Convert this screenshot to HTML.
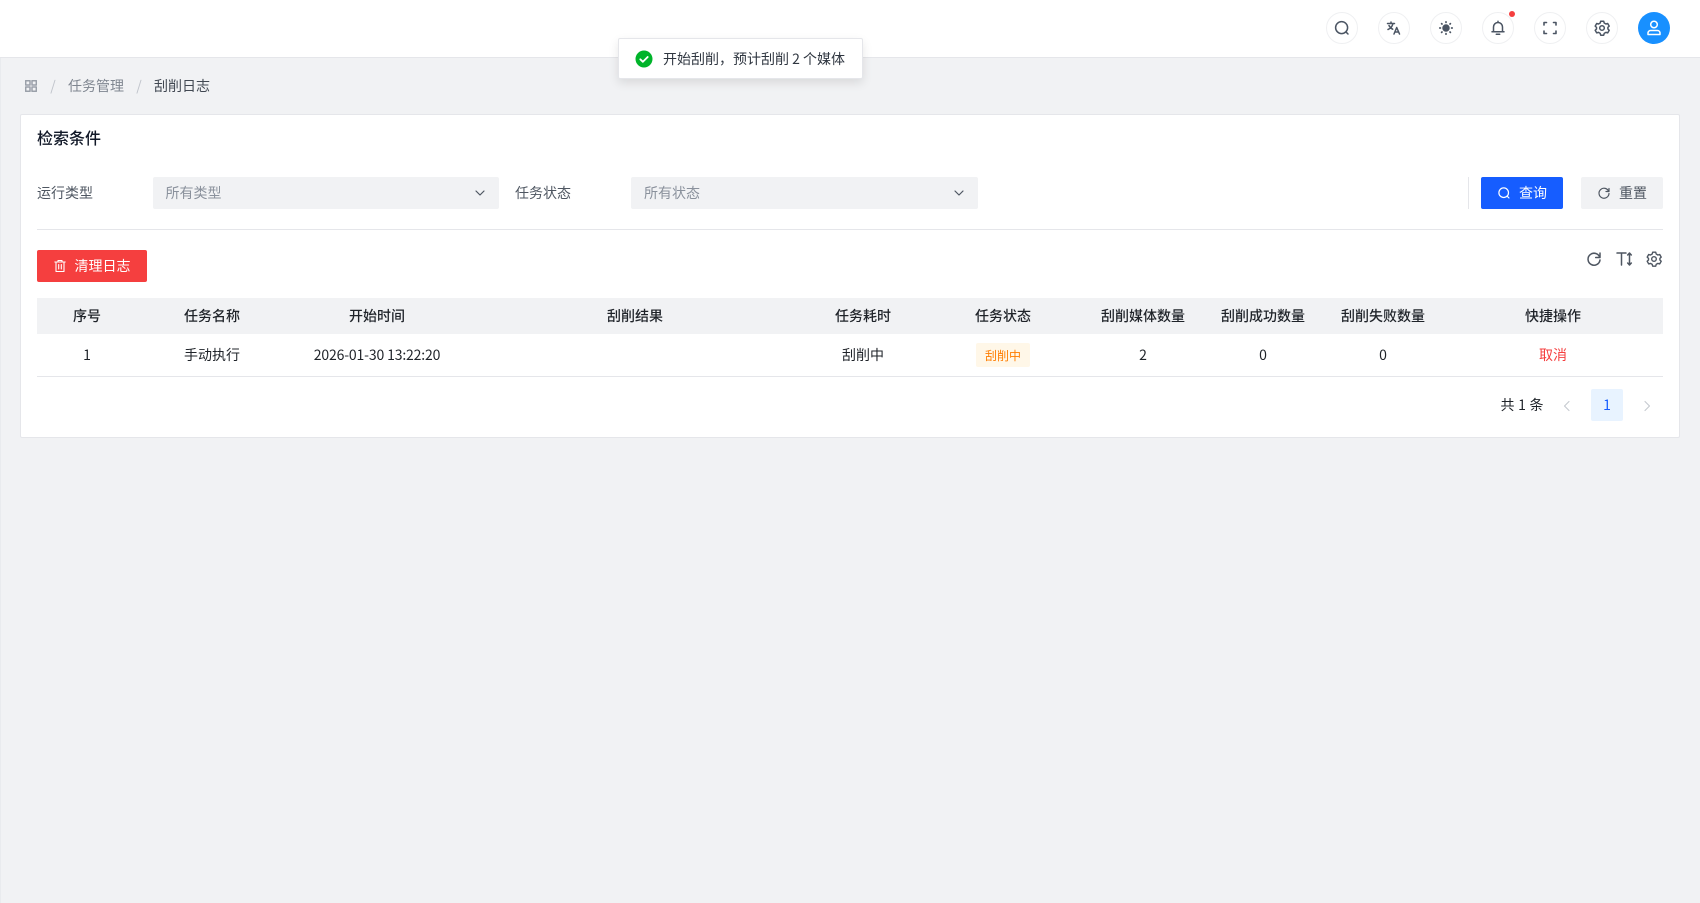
<!DOCTYPE html>
<html lang="zh-CN"><head><meta charset="utf-8"><title>刮削日志</title>
<style>
*{box-sizing:border-box}
html,body{margin:0;padding:0}
body{width:1700px;height:903px;overflow:hidden;position:relative;background:#f1f2f4;font-family:"Noto Sans CJK SC","Liberation Sans",sans-serif;font-size:14px;color:#1f2329}
.a{position:absolute;white-space:nowrap}
.t{position:absolute;white-space:nowrap;line-height:20px;transform:translate(-50%,-50%)}
.h{font-weight:500;color:#1f2329}
svg{position:absolute;display:block;fill:none;stroke-linecap:round;stroke-linejoin:round}
.c{position:absolute;top:12px;width:32px;height:32px;border:1px solid #eff0f2;border-radius:50%;background:#fff}
.c svg{left:7px;top:7px;stroke:#4b5563;stroke-width:1.5}
</style></head><body>
<div class="a" style="left:0;top:0;width:1700px;height:58px;background:#fff;border-bottom:1px solid #e5e6ea"></div>
<div class="a" style="left:0;top:58px;width:1px;height:845px;background:#e9ebee"></div>

<div class="c" style="left:1326px"><svg width="16" height="16" viewBox="0 0 16 16"><circle cx="7.600" cy="7.600" r="6"/><path d="M12.200 12.200l1.800 1.800"/></svg></div>
<div class="c" style="left:1378px"><svg width="16" height="16" viewBox="0 0 16 16"><path d="M1.500 3.500h7M5 2v1.500M7 3.500C6.300 6.500 4.500 8.500 2 9.500M3 5.500c.8 1.700 2.200 3 3.700 3.700M8 14l2.700-6.500L13.500 14M9 12h3.400"/></svg></div>
<div class="c" style="left:1430px"><svg width="16" height="16" viewBox="0 0 16 16"><circle cx="8" cy="8" r="3" fill="#4b5563"/><path stroke-width="1.700" d="M8 1.800v.6M8 13.600v.6M1.800 8h.6M13.600 8h.6M3.600 3.600l.4.4M12 12l.4.4M3.600 12.400l.4-.4M12 4l.4-.4"/></svg></div>
<div class="c" style="left:1482px"><svg width="16" height="16" viewBox="0 0 16 16"><path d="M2 11.800h12M3.500 11.800V7a4.500 4.500 0 0 1 9 0v4.800M8 1.200v1.300M6.300 14.300h3.400"/></svg></div>
<div class="c" style="left:1534px"><svg width="16" height="16" viewBox="0 0 16 16"><path stroke-width="1.600" d="M2 5V2.500h2.500M11.500 2.500H14V5M14 11v2.500h-2.500M4.500 13.500H2V11"/></svg></div>
<div class="c" style="left:1586px"><svg width="16" height="16" viewBox="0 0 16 16"><path d="M6.500 1.500h3l.5 1.800 1.700 1 1.800-.5 1.500 2.600-1.300 1.300v1.600l1.300 1.300-1.500 2.600-1.800-.5-1.700 1-.5 1.800h-3l-.5-1.800-1.700-1-1.800.5-1.500-2.600 1.300-1.300V7.700L1 6.400l1.500-2.600 1.800.5 1.700-1z" transform="translate(.2 -.3)"/><circle cx="8" cy="8" r="2.300"/></svg></div>
<div class="a" style="left:1638px;top:12px;width:32px;height:32px;border-radius:50%;background:#1890ff"><svg style="left:7px;top:7px;stroke:#fff;stroke-width:1.500" width="18" height="18" viewBox="0 0 18 18"><circle cx="9" cy="5.500" r="3.300"/><path d="M3 15.500v-1.500a2.500 2.500 0 0 1 2.500-2.500h7a2.500 2.500 0 0 1 2.500 2.500v1.500z"/></svg></div>
<div class="a" style="left:1509px;top:11px;width:6px;height:6px;border-radius:50%;background:#f53f3f"></div>

<svg style="left:25px;top:80px;stroke:#9aa0a9;stroke-width:1.500" width="12" height="12" viewBox="0 0 12 12"><rect x=".7" y=".7" width="4.300" height="4.300"/><rect x="7" y=".7" width="4.300" height="4.300"/><rect x=".7" y="7" width="4.300" height="4.300"/><rect x="7" y="7" width="4.300" height="4.300"/></svg>
<div class="t" style="left:53px;top:86px;color:#c0c4cb">/</div>
<div class="t" style="left:96px;top:86px;color:#7f8690">任务管理</div>
<div class="t" style="left:139px;top:86px;color:#c0c4cb">/</div>
<div class="t" style="left:182px;top:86px;color:#414852">刮削日志</div>

<div class="a" style="left:20px;top:114px;width:1660px;height:324px;background:#fff;border:1px solid #e5e6ea;border-radius:2px"></div>
<div class="t" style="left:69px;top:137px;font-size:16px;font-weight:500;color:#111827;line-height:22px">检索条件</div>

<div class="t" style="left:65px;top:193px;color:#4e5661">运行类型</div>
<div class="a" style="left:153px;top:177px;width:346px;height:32px;background:#f1f2f4;border-radius:2px"></div>
<div class="t" style="left:193.500px;top:193px;color:#8a919c">所有类型</div>
<svg style="left:474px;top:188px;stroke:#4e5661;stroke-width:1.200" width="12" height="10" viewBox="0 0 12 10"><path d="M2 3l4 4 4-4"/></svg>
<div class="t" style="left:543px;top:193px;color:#4e5661">任务状态</div>
<div class="a" style="left:631px;top:177px;width:347px;height:32px;background:#f1f2f4;border-radius:2px"></div>
<div class="t" style="left:672px;top:193px;color:#8a919c">所有状态</div>
<svg style="left:953px;top:188px;stroke:#4e5661;stroke-width:1.200" width="12" height="10" viewBox="0 0 12 10"><path d="M2 3l4 4 4-4"/></svg>

<div class="a" style="left:1468px;top:177px;width:1px;height:32px;background:#e5e6ea"></div>
<div class="a" style="left:1481px;top:177px;width:82px;height:32px;background:#165dff;border-radius:2px"></div>
<svg style="left:1497px;top:186px;stroke:#fff;stroke-width:1.200" width="14" height="14" viewBox="0 0 14 14"><circle cx="6.700" cy="6.700" r="4.800"/><path d="M10.300 10.300l1.700 1.700"/></svg>
<div class="t" style="left:1533px;top:193px;color:#fff">查询</div>
<div class="a" style="left:1581px;top:177px;width:82px;height:32px;background:#f1f2f4;border-radius:2px"></div>
<svg style="left:1597px;top:186px;stroke:#4e5661;stroke-width:1.200" width="14" height="14" viewBox="0 0 14 14"><path d="M11.700 5.500A5 5 0 1 0 12 7.500M12 2.500v3H9"/></svg>
<div class="t" style="left:1633px;top:193px;color:#4e5661">重置</div>
<div class="a" style="left:37px;top:229px;width:1626px;height:1px;background:#e5e6ea"></div>

<div class="a" style="left:37px;top:250px;width:110px;height:32px;background:#f53f3f;border-radius:2px"></div>
<svg style="left:53px;top:259px;stroke:#fff;stroke-width:1.100" width="14" height="14" viewBox="0 0 14 14"><path d="M1.800 3h10.400M5 3V1.500h4V3M3 3v9.500h8V3M5.700 5.500v4.500M8.300 5.500v4.500"/></svg>
<div class="t" style="left:102.500px;top:266px;color:#fff">清理日志</div>

<svg style="left:1586px;top:251px;stroke:#4e5661;stroke-width:1.500" width="16" height="16" viewBox="0 0 16 16"><path d="M13.800 6.500A6 6 0 1 0 14 9M14 2v4.500H9.700"/></svg>
<svg style="left:1616px;top:251px;stroke:#4e5661;stroke-width:1.500" width="17" height="16" viewBox="0 0 17 16"><path d="M1 2h9M5.500 2v12M13.500 2v12M11.700 4l1.800-2 1.800 2M11.700 12l1.800 2 1.800-2"/></svg>
<svg style="left:1646px;top:251px;stroke:#4e5661;stroke-width:1.400" width="16" height="16" viewBox="0 0 16 16"><path d="M6.500 1.500h3l.5 1.800 1.700 1 1.800-.5 1.500 2.600-1.300 1.300v1.600l1.300 1.300-1.500 2.600-1.800-.5-1.700 1-.5 1.800h-3l-.5-1.800-1.700-1-1.800.5-1.500-2.600 1.300-1.300V7.700L1 6.400l1.500-2.600 1.800.5 1.700-1z" transform="translate(.2 -.3)"/><circle cx="8" cy="8" r="2.300"/></svg>

<div class="a" style="left:37px;top:298px;width:1626px;height:36px;background:#f1f2f4"></div>
<div class="t h" style="left:87px;top:316px">序号</div>
<div class="t h" style="left:212px;top:316px">任务名称</div>
<div class="t h" style="left:377px;top:316px">开始时间</div>
<div class="t h" style="left:635px;top:316px">刮削结果</div>
<div class="t h" style="left:863px;top:316px">任务耗时</div>
<div class="t h" style="left:1003px;top:316px">任务状态</div>
<div class="t h" style="left:1143px;top:316px">刮削媒体数量</div>
<div class="t h" style="left:1263px;top:316px">刮削成功数量</div>
<div class="t h" style="left:1383px;top:316px">刮削失败数量</div>
<div class="t h" style="left:1553px;top:316px">快捷操作</div>

<div class="t" style="left:87px;top:355px">1</div>
<div class="t" style="left:212px;top:355px">手动执行</div>
<div class="t" style="left:377px;top:355px;letter-spacing:-.15px">2026-01-30 13:22:20</div>
<div class="t" style="left:863px;top:355px">刮削中</div>
<div class="a" style="left:976px;top:343px;width:54px;height:24px;background:#fff7e8;border-radius:2px"></div>
<div class="t" style="left:1003px;top:355.500px;font-size:12px;color:#ff7d00">刮削中</div>
<div class="t" style="left:1143px;top:355px">2</div>
<div class="t" style="left:1263px;top:355px">0</div>
<div class="t" style="left:1383px;top:355px">0</div>
<div class="t" style="left:1553px;top:355px;color:#f53f3f">取消</div>
<div class="a" style="left:37px;top:376px;width:1626px;height:1px;background:#e5e6ea"></div>

<div class="t" style="left:1522px;top:405px;word-spacing:.5px">共 1 条</div>
<svg style="left:1561px;top:400px;stroke:#c5c9cf;stroke-width:1.100" width="12" height="12" viewBox="0 0 12 12"><path d="M8 1.500L3.500 6 8 10.500"/></svg>
<div class="a" style="left:1591px;top:389px;width:32px;height:32px;background:#e8f3ff;border-radius:2px"></div>
<div class="t" style="left:1607px;top:405px;color:#165dff">1</div>
<svg style="left:1641px;top:400px;stroke:#c5c9cf;stroke-width:1.100" width="12" height="12" viewBox="0 0 12 12"><path d="M4 1.500L8.500 6 4 10.500"/></svg>

<div class="a" style="left:617.500px;top:38px;width:245px;height:41px;background:#fff;border:1px solid #e5e6ea;border-radius:2px;box-shadow:0 4px 10px rgba(0,0,0,.1)"></div>
<svg style="left:635px;top:50px" width="18" height="18" viewBox="0 0 18 18"><circle cx="9" cy="9" r="8.500" fill="#00b42a"/><path d="M5.300 9.300l2.600 2.500 4.800-4.800" stroke="#fff" stroke-width="1.800"/></svg>
<div class="a" style="left:663px;top:49px;line-height:20px;color:#2f3640">开始刮削，预计刮削 2 个媒体</div>
</body></html>
